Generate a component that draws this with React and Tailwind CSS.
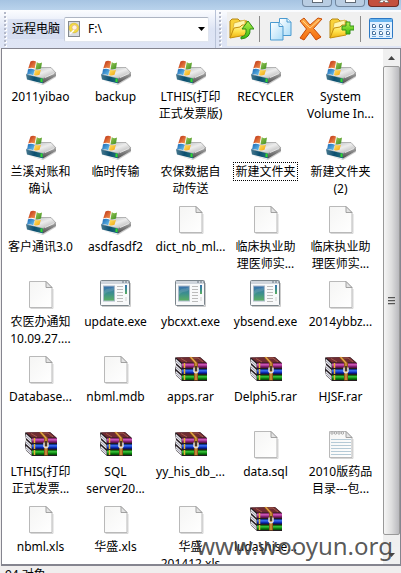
import React from "react";

const FILES = [
  ["drive", "2011yibao"],
  ["drive", "backup"],
  ["drive", "LTHIS(打印", "正式发票版)"],
  ["drive", "RECYCLER"],
  ["drive", "System", "Volume In..."],
  ["drive", "兰溪对账和", "确认"],
  ["drive", "临时传输"],
  ["drive", "农保数据自", "动传送"],
  ["drive", "新建文件夹"],
  ["drive", "新建文件夹", "(2)"],
  ["drive", "客户通讯3.0"],
  ["drive", "asdfasdf2"],
  ["file", "dict_nb_ml..."],
  ["file", "临床执业助", "理医师实..."],
  ["file", "临床执业助", "理医师实..."],
  ["file", "农医办通知", "10.09.27...."],
  ["exe", "update.exe"],
  ["exe", "ybcxxt.exe"],
  ["exe", "ybsend.exe"],
  ["file", "2014ybbz..."],
  ["file", "Database..."],
  ["file", "nbml.mdb"],
  ["rar", "apps.rar"],
  ["rar", "Delphi5.rar"],
  ["rar", "HJSF.rar"],
  ["rar", "LTHIS(打印", "正式发票..."],
  ["rar", "SQL", "server20..."],
  ["rar", "yy_his_db_..."],
  ["file", "data.sql"],
  ["note", "2010版药品", "目录---包..."],
  ["file", "nbml.xls"],
  ["file", "华盛.xls"],
  ["file", "华盛", "201412.xls"],
  ["rar", "ludashise..."],
];
const FOCUSED = 8;

function Gradient({ id, stops, x2 = 0, y2 = 1 }) {
  return (
    <linearGradient id={id} x1="0" y1="0" x2={x2} y2={y2}>
      {stops.map((c, i) => (
        <stop key={i} offset={i / (stops.length - 1)} stopColor={c} />
      ))}
    </linearGradient>
  );
}

function SharedGradients() {
  return (
    <svg className="absolute size-0" aria-hidden="true">
      <defs>
        <Gradient id="metal" stops={["#a4a8ab", "#ececec", "#a8a8a8"]} x2={1} />
        <Gradient id="side" stops={["#a4a4a4", "#4c4c4c"]} />
        <Gradient id="teal" stops={["#48788e", "#0c4f70", "#237079"]} x2={1} y2={0} />
        <Gradient id="red" stops={["#b82b12", "#f79a50"]} x2={1} />
        <Gradient id="green" stops={["#9ccc58", "#3c8b20"]} x2={1} />
        <Gradient id="blue" stops={["#1964b0", "#6cc6f2"]} x2={1} />
        <Gradient id="gold" stops={["#ffe26a", "#f2a50c"]} x2={1} />
        <Gradient id="paper" stops={["#f5f5f4", "#ffffff"]} x2={1} />
        <Gradient id="screen" stops={["#3a70b0", "#3c8f8d", "#5eb060"]} />
        <Gradient id="purpleBook" stops={["#6c1550", "#d25cc0", "#8c2478", "#4d0c3c"]} />
        <Gradient id="blueBook" stops={["#071a70", "#3c74f4", "#1030c0", "#04104c"]} />
        <Gradient id="greenBook" stops={["#064c08", "#3cc83c", "#0c8410", "#034404"]} />
        <Gradient id="folder" stops={["#fff7a0", "#ffe14a", "#eeb211"]} />
        <Gradient id="lime" stops={["#b6f04c", "#34b90c"]} />
        <Gradient id="sheet" stops={["#ffffff", "#a9dcf8"]} x2={1} />
        <Gradient id="orange" stops={["#ffb04a", "#f46a0c"]} />
      </defs>
    </svg>
  );
}

function DriveArt() {
  return (
    <>
      <path d="M2 24l15 4 14-8v1l-13 8Z" fill="#ccc" />
      <path d="M15 11.500L26 11.500L31 17L18 22.500L1 18.500Z" fill="url(#metal)" stroke="#8c8c8c" strokeWidth=".6" />
      <path d="M1 18.500L18 22.500V27.500L2 23.500Z" fill="url(#teal)" />
      <path d="M18 22.500L31 17V20L18 27.500Z" fill="url(#side)" />
      <path d="M20 21.500L29 17.500" stroke="#f4f4f4" strokeWidth=".8" />
      <path d="M16.500 22.500V26" stroke="#35d82a" strokeWidth="2" />
      <path d="M5.500 5.500C7 4.500 9 4.500 11 5.500L9.700 12.500C7.500 11.500 5.500 11.500 3.200 12.500Z" fill="url(#red)" />
      <path d="M11.800 6C13.500 7.500 15 7.500 17 6.500L16 12.500C14 13.500 12 13.500 10.500 12.700Z" fill="url(#green)" />
      <path d="M3 13.300C5 12.300 7.500 12.500 9.500 13.500L8.200 19.500C6 18.200 4 18 2 19Z" fill="url(#blue)" />
      <path d="M10.300 13.700C12 14.500 14 14.500 16 13.700L14.500 18.800C12.500 19.800 10.500 19.800 9 19Z" fill="url(#gold)" />
    </>
  );
}

function FileArt({ lined }) {
  return (
    <>
      <path d="M5.500 27.500H28V8" fill="none" stroke="#d6d6d6" />
      <path d="M4.500.500H21L27 6.500V26.500H4.500Z" fill="url(#paper)" stroke="#b9b9b9" />
      <path d="M21 .500V6.500H27Z" fill="#e3e3e3" stroke="#999" strokeWidth=".9" />
      {lined && (
        <>
          <path d="M6 8.500H26M6 11.500H26M6 14.500H26M6 17.500H26M6 20.500H26M6 23.500H26" stroke="#b5cad6" />
          {[7, 10.5, 14, 17.5].map((x) => (
            <circle key={x} cx={x} cy="2" r="1.200" fill="#fff" stroke="#888" strokeWidth=".7" />
          ))}
        </>
      )}
    </>
  );
}

function ExeArt() {
  return (
    <>
      <path d="M2 25.500H30.500V2" fill="none" stroke="#ccc" />
      <rect x=".500" y="-.500" width="29" height="25" rx="1" fill="#f8f9fa" stroke="#7b858c" />
      <path d="M1 1.500H29" stroke="#cfd5dc" strokeWidth="3" />
      <path d="M22 1H24M25 1H27M28 1H29" stroke="#65717d" />
      <rect x="3.500" y="5" width="11" height="15" fill="url(#screen)" stroke="#a9bac8" />
      <path d="M4 10C8 6 11 9 14 5.500V9C11 12 8 9 4 14Z" fill="#fff" opacity=".12" />
      <path d="M17 5.500H23M17 8.500H23M17 11.500H23M17 14.500H23M17 17.500H23M17 20.500H23" stroke="#bbb" />
      <rect x="25" y="4" width="2" height="9" fill="url(#screen)" />
      <path d="M25 16H27V20H25Z" fill="#e5e5e5" />
    </>
  );
}

function RarArt() {
  return (
    <>
      <path d="M0 1.500L25 1L32 7V25H7L1 19.500L0 14L1 9Z" fill="#241c20" />
      <path d="M1 1.500L24.500 1L31 6.500H7Z" fill="#6f2b32" />
      <path d="M6 2.500L12 6M16 2H23L28 6" stroke="#a25c48" fill="none" />
      <path d="M1 3L6.500 8V12L1 7ZM1 9L6.500 14V18L1 13ZM1 15L6.500 20V24L1 19Z" fill="#e7e7ee" />
      <path d="M1 5L6.500 10M1 11L6.500 16M1 17L6.500 22" stroke="#8b8b98" strokeWidth=".8" />
      <rect x="7" y="7" width="25" height="5" fill="url(#purpleBook)" />
      <rect x="7" y="13" width="25" height="5" fill="url(#blueBook)" />
      <rect x="7" y="19" width="25" height="5" fill="url(#greenBook)" />
      <path d="M9.500 7V12M9.500 13V18M9.500 19V24" stroke="#e5b435" strokeWidth="1.500" />
      <path d="M14 1L19 7V24.500H23V7L17 1Z" fill="#94581c" />
      <path d="M15.500 1L21 7V24" fill="none" stroke="#e3a747" strokeWidth="1.200" />
      <path d="M19 11.500V15.500Q21 18 23 15.500V11.500" fill="none" stroke="#ddd" strokeWidth="1.500" />
      <path d="M21 10V15" stroke="#222" strokeWidth="1.500" />
    </>
  );
}

function FileIcon({ kind }) {
  return (
    <svg className="size-8 shrink-0 overflow-visible" viewBox="0 0 32 32" aria-hidden="true">
      {kind === "drive" && <DriveArt />}
      {kind === "file" && <FileArt />}
      {kind === "note" && <FileArt lined />}
      {kind === "exe" && <ExeArt />}
      {kind === "rar" && <RarArt />}
    </svg>
  );
}

function FileItem({ kind, lines, focused }) {
  return (
    <li className="h-[75px]">
      <button type="button" className="flex w-full flex-col items-center text-xs leading-[17px] whitespace-nowrap">
        <FileIcon kind={kind} />
        <span className={focused ? "px-px outline-1 outline-dotted outline-black" : ""}>
          {lines.map((line) => (
            <span key={line} className="block">{line}</span>
          ))}
        </span>
      </button>
    </li>
  );
}

function FolderArt() {
  return (
    <>
      <path d="M1 21V4L3 2H9L11 4H18V8" fill="#f8d13a" stroke="#b58612" />
      <path d="M3 18L5 6L16 3V8" fill="#fff6b0" stroke="#d4a927" strokeWidth=".7" />
      <path d="M1 21L5 11L11 10L13 8H20L17 18Z" fill="url(#folder)" stroke="#c58f0c" />
    </>
  );
}

function ToolButton({ label, children }) {
  return (
    <button type="button" aria-label={label} className="shrink-0">
      <svg className="h-6 w-[25px]" viewBox="0 0 25 24" aria-hidden="true">{children}</svg>
    </button>
  );
}

function Sheet({ d, fold }) {
  return (
    <>
      <path d={d} fill="url(#sheet)" stroke="#4a9ad0" />
      <path d={fold} fill="#e9f8ff" stroke="#4a9ad0" />
    </>
  );
}

function Gripper() {
  return (
    <svg className="h-9 w-1 shrink-0" viewBox="0 0 4 36" aria-hidden="true">
      {[1, 5, 9, 13, 17, 21, 25, 29, 33].map((y) => (
        <g key={y}>
          <rect x="1" y={y + 1} width="2" height="2" fill="#fff" />
          <rect x="0" y={y} width="2" height="2" fill="#b3b8c8" />
        </g>
      ))}
    </svg>
  );
}

function Separator() {
  return <div className="h-[26px] w-px shrink-0 bg-[#8c8c8c]" />;
}

function TitleBar() {
  return (
    <header className="flex h-[10px] shrink-0 justify-end gap-[3px] bg-linear-to-b from-[#a6c4e2] to-[#b9d3ec] pr-[2px]">
      <button type="button" aria-label="最小化" className="flex h-[7px] w-[30px] justify-center rounded-b-sm border border-t-0 border-[#71879f] bg-[#b9cde2]">
        <span className="h-[3px] w-[11px] border border-t-0 border-[#606a75] bg-white" />
      </button>
      <button type="button" aria-label="最大化" className="flex h-[7px] w-[30px] justify-center rounded-b-sm border border-t-0 border-[#71879f] bg-[#b9cde2]">
        <span className="h-[3px] w-[11px] border border-t-0 border-[#606a75] bg-white" />
      </button>
      <button type="button" aria-label="关闭" className="flex h-[7px] w-[31px] justify-center rounded-b-sm border border-t-0 border-[#6b2a25] bg-[#c4503f]">
        <svg className="h-[3px] w-3" viewBox="0 0 12 3" aria-hidden="true">
          <path d="M3 0L1 2.500H4.500L6 1L7.500 2.500H11L9 0Z" fill="#fff" stroke="#555" strokeWidth=".6" />
        </svg>
      </button>
    </header>
  );
}

function Toolbar() {
  return (
    <div className="flex h-[38px] shrink-0 bg-linear-to-b from-[#fcfdff] via-[#dde4f4] to-[#dfe5f5]">
      <div className="flex min-w-0 flex-1 items-center pl-1">
        <Gripper />
        <label htmlFor="drive" className="flex h-5 shrink-0 items-center bg-[#d1d9ed]/60 px-1 text-xs">远程电脑</label>
        <div className="grid min-w-0 flex-1 items-center">
          <select id="drive" className="col-start-1 row-start-1 h-[25px] w-full appearance-none rounded-xs border border-t-[#aeb5c2] border-r-[#e0e5ee] border-b-[#e0e5ee] border-l-[#c7cddb] bg-white pl-[23px] text-xs text-black">
            <option>F:\</option>
          </select>
          <svg className="pointer-events-none col-start-1 row-start-1 ml-1 h-4 w-3" viewBox="0 0 12 16" aria-hidden="true">
            <rect x=".500" y=".500" width="11" height="15" fill="#d9dce0" stroke="#858a90" />
            <circle cx="6" cy="7" r="4.800" fill="#f4dc45" stroke="#d8b51d" strokeWidth=".6" />
            <circle cx="6.500" cy="6.500" r="2.500" fill="#fff1e3" stroke="#d9a987" strokeWidth=".6" />
            <path d="M2 13L6 9" stroke="#fff" strokeWidth="1.500" />
          </svg>
          <svg className="pointer-events-none col-start-1 row-start-1 mr-1 h-1 w-[7px] justify-self-end" viewBox="0 0 7 4" aria-hidden="true">
            <path d="M0 0H7L3.500 4Z" fill="#000" />
          </svg>
        </div>
        <div className="mr-[3px] ml-[6px] h-full w-px bg-[#b9c3d8]" />
        <Gripper />
      </div>
      <div className="ml-1 flex shrink-0 self-stretch py-[2px]">
        <div className="flex items-center bg-[#f0f0f0] pr-[7px] pl-[2px]">
          <ToolButton label="向上">
            <FolderArt />
            <path d="M12 20Q18 19 17 12H13L19 4L25 12H21Q22 21 12 22Z" fill="url(#lime)" stroke="#2d8d17" />
          </ToolButton>
          <div className="flex items-center pr-[9px] pl-[5px]"><Separator /></div>
          <ToolButton label="复制">
            <Sheet d="M10.500 1.500H18L22 5V18.500H10.500Z" fold="M18 1.500V5H22" />
            <Sheet d="M1.500 5.500H10L14 9.500V23H1.500Z" fold="M10 5.500V9.500H14" />
          </ToolButton>
          <div className="ml-[5px] flex">
            <ToolButton label="删除">
              <path d="M1 4L5 1L11 8L19 1L23 2L14.500 11.500L22 20L17 23L11 15L5 23L1 21L7.500 12Z" fill="url(#orange)" stroke="#c64a08" />
              <path d="M4 4L11 11L20 3" fill="none" stroke="#ffd28a" />
            </ToolButton>
          </div>
          <div className="ml-[5px] flex">
            <ToolButton label="新建文件夹">
              <FolderArt />
              <path d="M17 5H21V9H25V13H21V17H17V13H13V9H17Z" fill="url(#lime)" stroke="#36911a" />
            </ToolButton>
          </div>
          <div className="flex items-center pr-2 pl-[6px]"><Separator /></div>
          <ToolButton label="查看">
            <rect x=".500" y="1.500" width="23" height="20" rx="1" fill="#e2f1ff" stroke="#2c78c4" />
            <path d="M1 3.500H23" stroke="#68b4ef" strokeWidth="3" />
            {[3, 10, 17].map((x) =>
              [7, 14].map((y) => (
                <g key={`${x}-${y}`}>
                  <path d={`M${x + 0.5} ${y + 0.5}h2l1 1v2h-3Z`} fill="#fff" stroke="#44719d" />
                  <path d={`M${x} ${y + 5.5}h4`} stroke="#6eaae0" />
                </g>
              ))
            )}
          </ToolButton>
        </div>
      </div>
    </div>
  );
}

function Arrow({ d }) {
  return (
    <svg className="h-[17px] w-full shrink-0 bg-[#f0f0f0]" viewBox="0 0 17 17" aria-hidden="true">
      <path d={d} fill="#444" />
    </svg>
  );
}

function Scrollbar() {
  return (
    <div className="flex w-[17px] shrink-0 flex-col bg-[#efefef]">
      <Arrow d="M5 11L8.500 7L12 11Z" />
      <div className="mb-[12px] flex flex-1 flex-col items-center justify-center gap-px rounded-xs border border-[#999] bg-linear-to-r from-[#f5f5f5] via-[#dedede] to-[#b9b9bd]">
        <span className="h-[2px] w-[7px] border-t border-[#555] bg-[#bbb]" />
        <span className="h-[2px] w-[7px] border-t border-[#555] bg-[#bbb]" />
        <span className="h-[2px] w-[7px] border-t border-[#555] bg-[#bbb]" />
      </div>
      <Arrow d="M5 6L8.500 10L12 6Z" />
    </div>
  );
}

export default function App() {
  return (
    <div className="relative flex h-screen flex-col overflow-hidden bg-[#f0eeee] font-['Noto_Sans','Noto_Sans_CJK_SC',sans-serif] text-black">
      <SharedGradients />
      <TitleBar />
      <Toolbar />
      <main className="ml-px flex min-h-0 flex-1 border border-b-2 border-[#85858f] bg-white">
        <ul className="grid min-w-0 flex-1 grid-cols-[repeat(auto-fill,75px)] content-start overflow-hidden pt-[7px] pl-px">
          {FILES.map(([kind, ...lines], i) => (
            <FileItem key={i} kind={kind} lines={lines} focused={i === FOCUSED} />
          ))}
        </ul>
        <Scrollbar />
      </main>
      <footer className="h-[7px] shrink-0 overflow-hidden pl-[5px] text-xs leading-[17px]">94 对象</footer>
      <div className="pointer-events-none absolute right-[8px] bottom-[11px] text-2xl text-[#444]/90">www.wooyun.org</div>
    </div>
  );
}
